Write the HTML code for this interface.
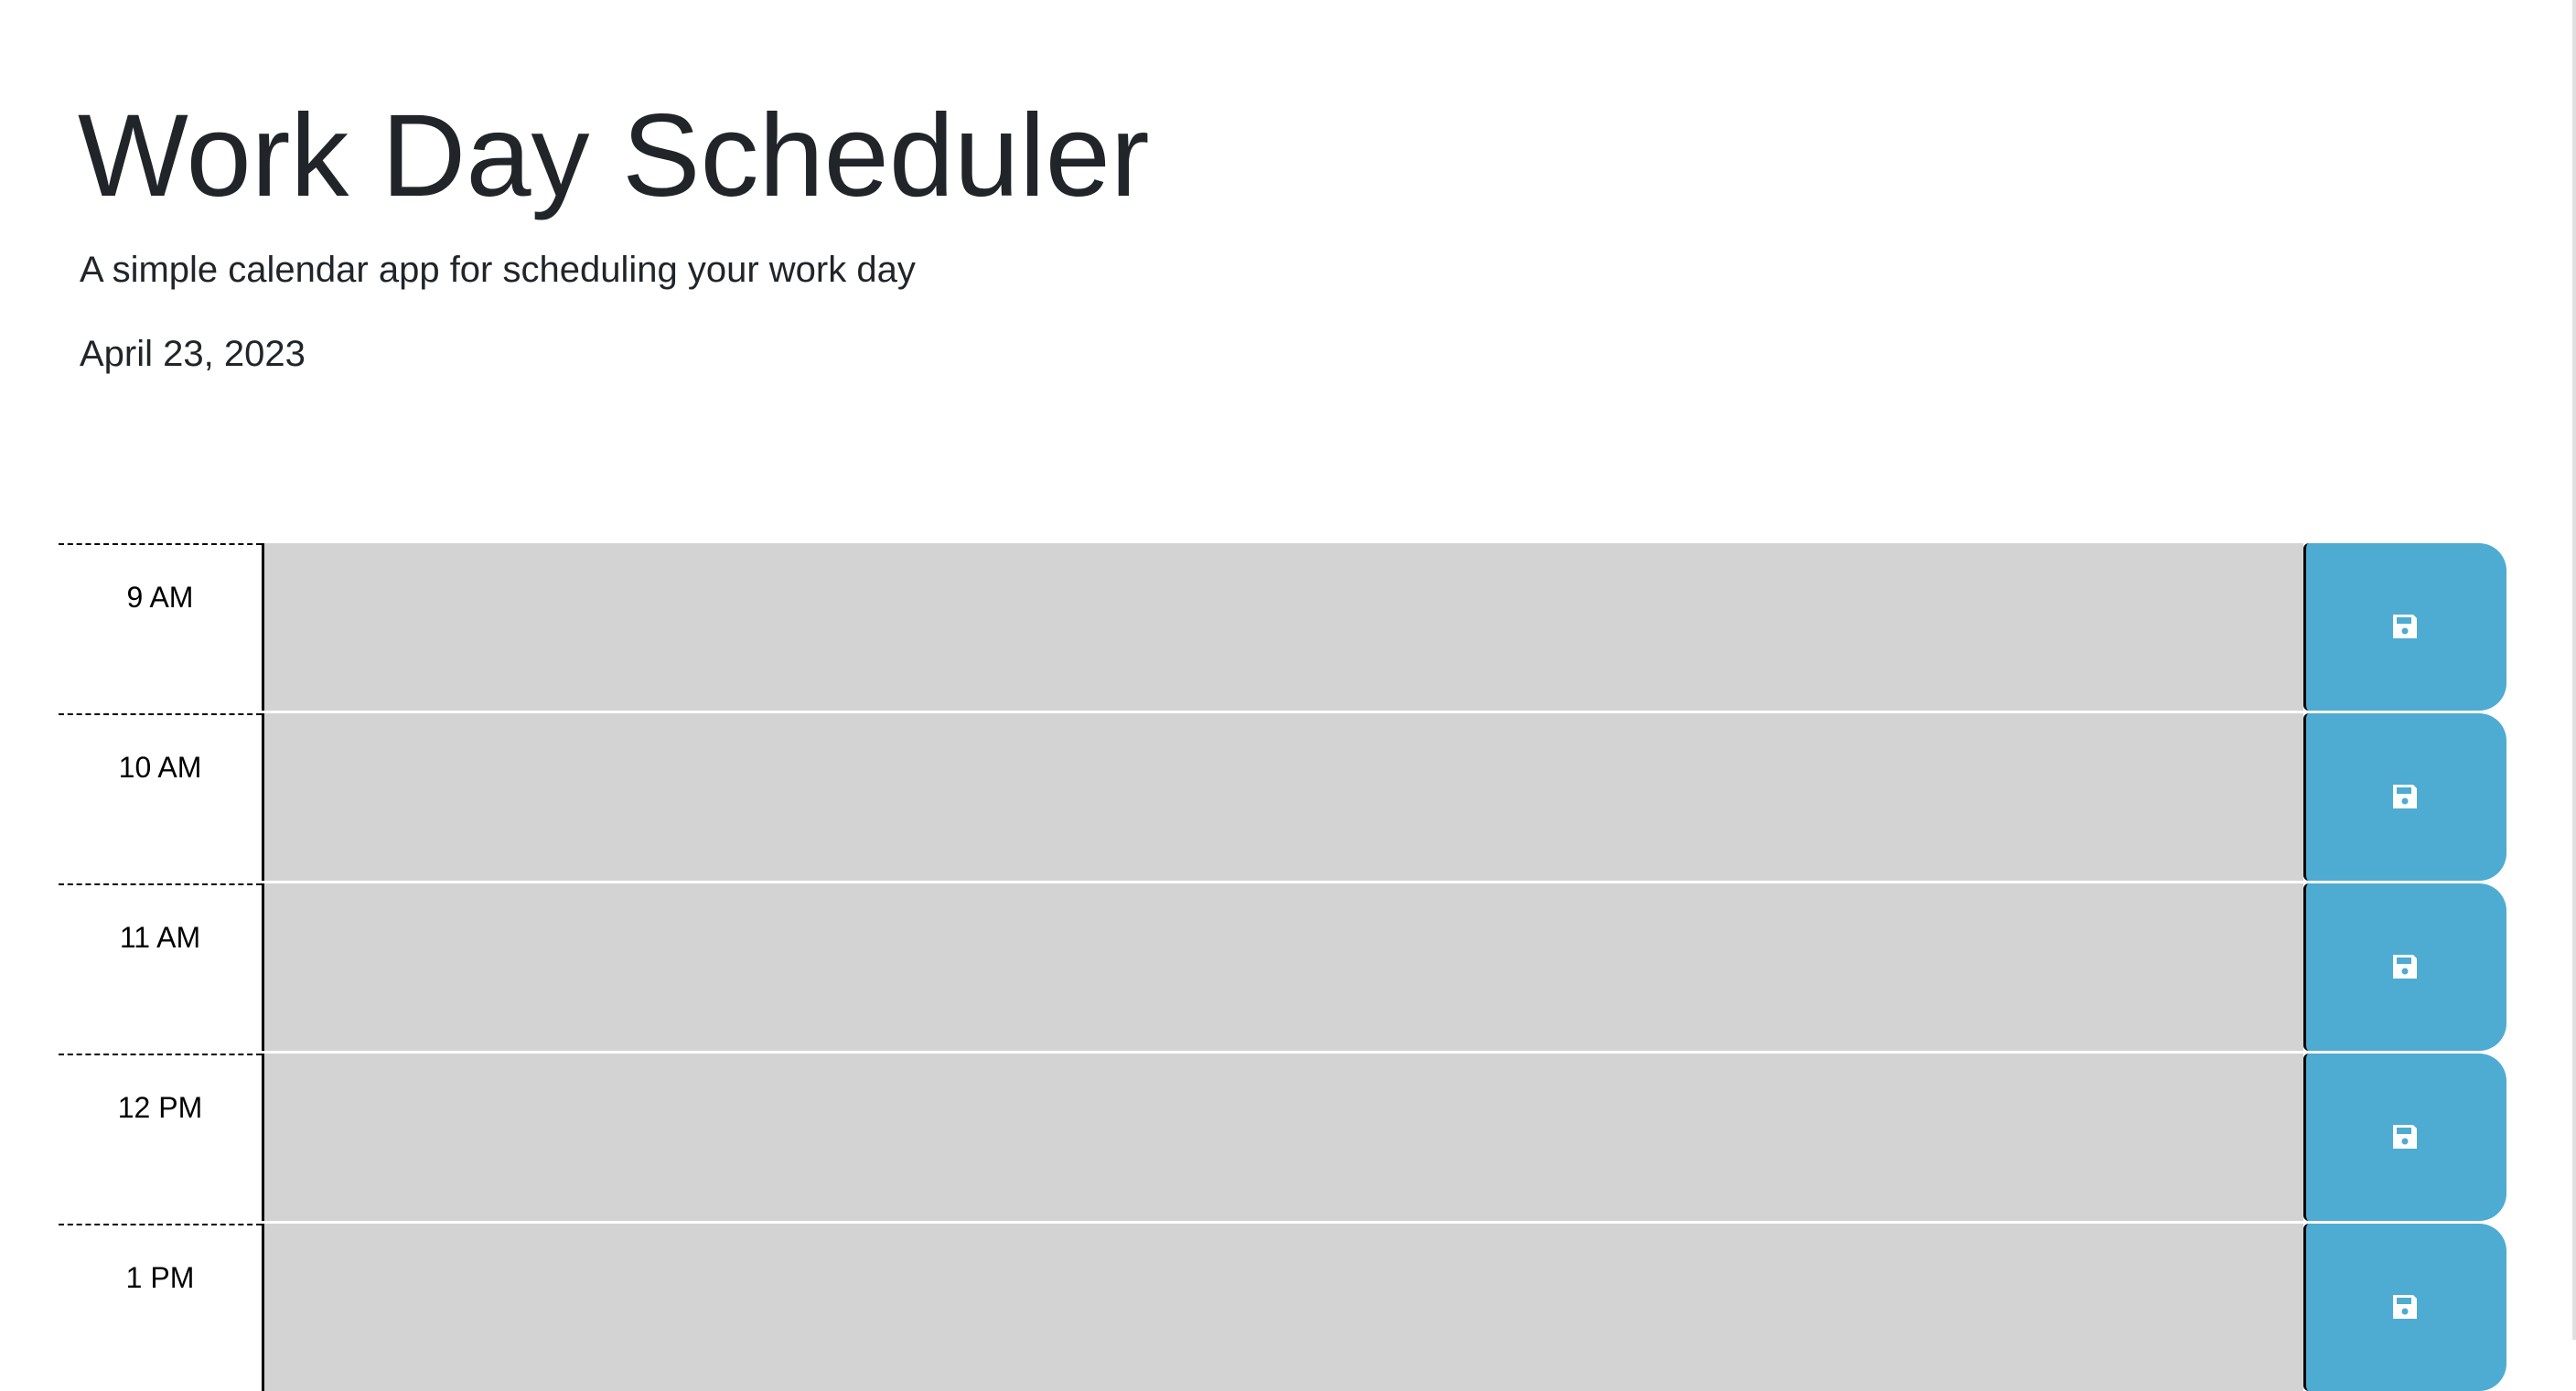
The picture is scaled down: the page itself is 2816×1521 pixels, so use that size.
<!DOCTYPE html>
<html><head><style>
html,body{margin:0;padding:0;background:#fff;}
body{width:2816px;height:1465px;overflow:hidden;position:relative;font-family:"Liberation Sans",Arial,sans-serif;color:#212529;}
.t{position:absolute;white-space:nowrap;line-height:1;}
h1{position:absolute;left:85px;top:107px;margin:0;font-size:128px;font-weight:400;line-height:1;white-space:nowrap;}
.row{position:absolute;left:64px;width:2676px;height:183px;}
.hour{position:absolute;left:0;top:0;width:222px;height:183px;border-top:2px dashed #000;box-sizing:border-box;text-align:center;font-size:32px;color:#000;padding-top:39px;}
.ta{position:absolute;left:222px;top:0;width:2232px;height:183px;background:#d3d3d3;border-left:3px solid #000;box-sizing:border-box;}
.btn{position:absolute;left:2454px;top:0;width:222px;height:183px;background:#4eabd2;border-left:3px solid #000;border-radius:6px 30px 30px 6px;box-sizing:border-box;}
.btn svg{position:absolute;left:93px;top:76px;}
.sb{position:absolute;left:2812px;top:0;width:4px;height:1465px;background:#e0e0e0;}
</style></head><body>
<h1>Work Day Scheduler</h1>
<div class="t" style="left:87px;top:275px;font-size:40px;">A simple calendar app for scheduling your work day</div>
<div class="t" style="left:87px;top:367px;font-size:40px;">April 23, 2023</div>

<div class="row" style="top:594px"><div class="hour">9 AM</div><div class="ta"></div><div class="btn"><svg width="30" height="30" viewBox="0 0 30 30"><path d="M2 2h22l4 4v22H2z" fill="#fff"/><rect x="6" y="5" width="16" height="7" fill="#4eabd2"/><circle cx="15" cy="20" r="3.5" fill="#4eabd2"/></svg></div></div>
<div class="row" style="top:780px"><div class="hour">10 AM</div><div class="ta"></div><div class="btn"><svg width="30" height="30" viewBox="0 0 30 30"><path d="M2 2h22l4 4v22H2z" fill="#fff"/><rect x="6" y="5" width="16" height="7" fill="#4eabd2"/><circle cx="15" cy="20" r="3.5" fill="#4eabd2"/></svg></div></div>
<div class="row" style="top:966px"><div class="hour">11 AM</div><div class="ta"></div><div class="btn"><svg width="30" height="30" viewBox="0 0 30 30"><path d="M2 2h22l4 4v22H2z" fill="#fff"/><rect x="6" y="5" width="16" height="7" fill="#4eabd2"/><circle cx="15" cy="20" r="3.5" fill="#4eabd2"/></svg></div></div>
<div class="row" style="top:1152px"><div class="hour">12 PM</div><div class="ta"></div><div class="btn"><svg width="30" height="30" viewBox="0 0 30 30"><path d="M2 2h22l4 4v22H2z" fill="#fff"/><rect x="6" y="5" width="16" height="7" fill="#4eabd2"/><circle cx="15" cy="20" r="3.5" fill="#4eabd2"/></svg></div></div>
<div class="row" style="top:1338px"><div class="hour">1 PM</div><div class="ta"></div><div class="btn"><svg width="30" height="30" viewBox="0 0 30 30"><path d="M2 2h22l4 4v22H2z" fill="#fff"/><rect x="6" y="5" width="16" height="7" fill="#4eabd2"/><circle cx="15" cy="20" r="3.5" fill="#4eabd2"/></svg></div></div>
<div class="sb"></div>
</body></html>
